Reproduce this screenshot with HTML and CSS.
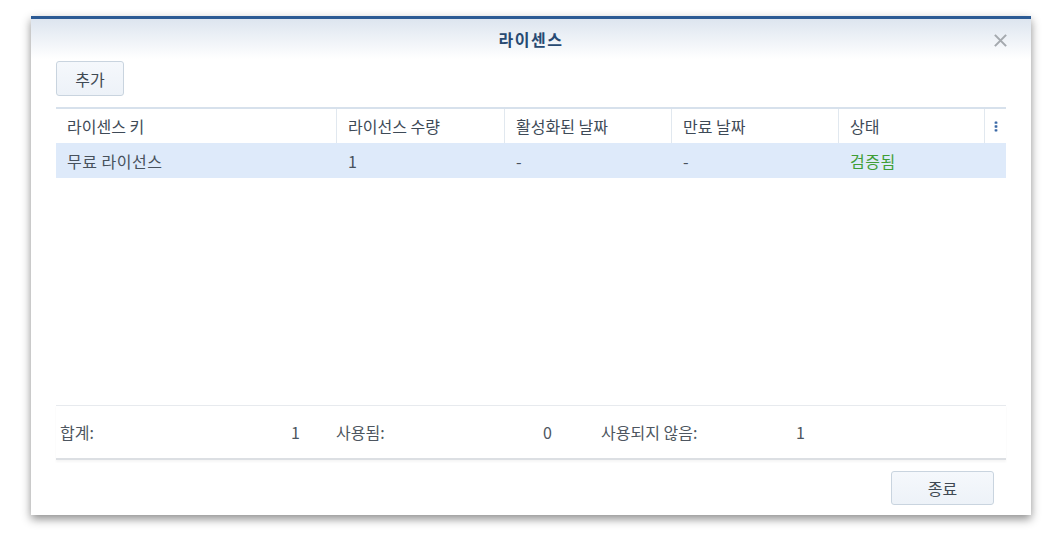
FILE: index.html
```html
<!DOCTYPE html>
<html>
<head>
    <title>라이센스</title>
    <link rel="stylesheet" href="styles.css">
</head>
<body>
    <div class="dialog">
        <div class="dialog-header">
            <span class="dialog-title">라이센스</span>
            <svg class="close-icon" viewBox="0 0 16 16" fill="none" stroke="currentColor" stroke-width="2.2">
                <path d="M2 2l12 12M14 2L2 14"/>
            </svg>
        </div>
        <div class="dialog-body">
            <div class="toolbar">
                <button class="btn btn-add">추가</button>
            </div>
            <div class="grid">
                <div class="grid-head">
                    <div class="cell col-key">라이센스 키</div>
                    <div class="cell col-qty">라이선스 수량</div>
                    <div class="cell col-act">활성화된 날짜</div>
                    <div class="cell col-exp">만료 날짜</div>
                    <div class="cell col-status">상태</div>
                    <div class="cell col-menu">
                        <svg class="menu-icon" viewBox="0 0 4 12">
                            <rect x="0.5" y="0.5" width="3" height="2.6" rx="0.5"/>
                            <rect x="0.5" y="4.7" width="3" height="2.6" rx="0.5"/>
                            <rect x="0.5" y="8.9" width="3" height="2.6" rx="0.5"/>
                        </svg>
                    </div>
                </div>
                <div class="grid-row selected">
                    <div class="cell col-key">무료 라이선스</div>
                    <div class="cell col-qty">1</div>
                    <div class="cell col-act">-</div>
                    <div class="cell col-exp">-</div>
                    <div class="cell col-status status-ok">검증됨</div>
                    <div class="cell col-menu"></div>
                </div>
            </div>
            <div class="summary">
                <span class="sum-label">합계:</span>
                <span class="sum-value">1</span>
                <span class="sum-label">사용됨:</span>
                <span class="sum-value">0</span>
                <span class="sum-label">사용되지 않음:</span>
                <span class="sum-value">1</span>
            </div>
        </div>
        <div class="dialog-footer">
            <button class="btn btn-close">종료</button>
        </div>
    </div>
</body>
</html>
```

FILE: styles.css
```css
html, body {
    height: 100%;
}
body {
    margin: 0;
    background-color: #ffffff;
    font-family: "Noto Sans CJK KR", "Noto Sans", sans-serif;
    font-size: 16px;
    color: #47515c;
}
.dialog {
    width: 1000px;
    height: 496px;
    margin: 16px 0 0 31px;
    border-top: 3px solid #2b5a94;
    background-color: #ffffff;
    box-shadow: 0 4px 9px rgba(0,0,0,0.45);
    display: flex;
    flex-direction: column;
}
.dialog-header {
    position: relative;
    height: 40px;
    display: flex;
    align-items: center;
    justify-content: center;
    background: linear-gradient(#dde5ef, #ffffff);
}
.dialog-title {
    font-size: 16px;
    font-weight: bold;
    letter-spacing: 1.5px;
    color: #284a72;
}
.close-icon {
    position: absolute;
    top: 14px;
    right: 23px;
    width: 15px;
    height: 15px;
    color: #a4a9ae;
}
.dialog-body {
    flex: 1;
    padding: 2px 25px 0;
    display: flex;
    flex-direction: column;
}
.toolbar {
    margin-bottom: 11px;
}
.btn {
    font-family: inherit;
    font-size: 16px;
    color: #3f4953;
    background: linear-gradient(#f5f8fc, #edf2f8);
    border: 1px solid #c9d4df;
    border-radius: 3px;
    cursor: pointer;
}
.btn-add {
    width: 68px;
    height: 35px;
}
.grid {
    flex: 1;
    border-top: 2px solid #d7e1ec;
}
.grid-head,
.grid-row {
    display: flex;
}
.grid-head {
    height: 34px;
    color: #3e4a57;
}
.grid-row {
    height: 35px;
    letter-spacing: 0.5px;
}
.grid-row.selected {
    background-color: #deeafa;
}
.cell {
    display: flex;
    align-items: center;
    padding: 0 11px;
    box-sizing: border-box;
    white-space: nowrap;
}
.grid-head .cell {
    border-right: 1px solid #e1e8ef;
}
.grid-head .col-menu {
    border-right: none;
}
.col-key { width: 281px; }
.col-qty { width: 168px; }
.col-act { width: 167px; }
.col-exp { width: 167px; }
.col-status { width: 146px; }
.col-menu {
    width: 21px;
    padding: 0;
    justify-content: center;
}
.menu-icon {
    width: 4px;
    height: 11px;
    fill: #3b69a6;
}
.status-ok {
    color: #3f9e35;
}
.summary {
    height: 52px;
    display: grid;
    grid-template-columns: 231px 45px 207px 58px 195px auto;
    align-items: center;
    padding-left: 4px;
    border-top: 1px solid #e7eaee;
    border-bottom: 2px solid #dcdfe3;
    box-shadow: 0 2px 2px rgba(0,0,0,0.04);
    color: #4d5660;
}
.dialog-footer {
    height: 55px;
    display: flex;
    align-items: center;
    justify-content: flex-end;
    padding: 0 37px 0 0;
}
.btn-close {
    width: 103px;
    height: 34px;
}
```
